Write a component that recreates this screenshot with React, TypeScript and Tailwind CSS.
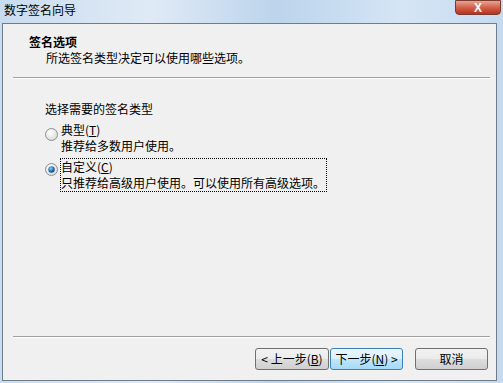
import React from "react";

const font = { fontFamily: '"Noto Sans CJK SC", "Liberation Sans", sans-serif' };

function Radio({ checked }: { checked?: boolean }) {
  return (
    <svg width="13" height="13" viewBox="0 0 13 13" className="shrink-0">
      <defs>
        <radialGradient id={checked ? "rg1" : "rg0"} cx="40%" cy="35%" r="70%">
          <stop offset="0%" stopColor="#ffffff" />
          <stop offset="100%" stopColor="#d8d8d8" />
        </radialGradient>
        <radialGradient id="dot" cx="40%" cy="35%" r="70%">
          <stop offset="0%" stopColor="#8fd0f5" />
          <stop offset="60%" stopColor="#1f6fb5" />
          <stop offset="100%" stopColor="#0b3c73" />
        </radialGradient>
      </defs>
      <circle cx="6.5" cy="6.5" r="6" fill={`url(#${checked ? "rg1" : "rg0"})`} stroke="#8e8f8f" strokeWidth="1" />
      {checked && <circle cx="6.5" cy="6.5" r="3.2" fill="url(#dot)" />}
    </svg>
  );
}

export default function App() {
  return (
    <div
      className="w-[503px] h-[383px] flex flex-col text-[12px] text-black overflow-hidden"
      style={{ ...font, background: "linear-gradient(90deg,#c9dcef 0%,#dfeaf6 30%,#bcd4ec 55%,#d5e5f5 80%,#c6daef 100%)" }}
    >
      <div className="h-[23px] flex items-start shrink-0">
        <div className="pl-[4px] pt-[1px] leading-[18px] text-[12px] text-black">数字签名向导</div>
        <div className="flex-1" />
        <div className="mr-[2px] w-[46px] h-[15px] rounded-b-[4px] border border-[#7a3a30] bg-[linear-gradient(180deg,#e8a595_0%,#d2604a_50%,#b8321e_100%)] flex items-center justify-center">
          <span className="text-white text-[12px] font-bold leading-none" style={{ fontFamily: '"Liberation Sans", sans-serif' }}>X</span>
        </div>
      </div>
      <div className="ml-[2px] mr-[6px] mb-[2px] flex-1 border border-[#6e7c8c] bg-[#f0f0f0] flex flex-col">
        <div className="pl-[26px] pt-[10px] h-[53px]">
          <div className="font-bold leading-[16px]">签名选项</div>
          <div className="pl-[17px] leading-[16px]">所选签名类型决定可以使用哪些选项。</div>
        </div>
        <div className="ml-[10px] mr-[6px] h-[2px] border-t border-[#a0a0a0] border-b border-b-white" />
        <div className="flex-1 pl-[42px] pt-[22px]">
          <div className="leading-[16px]">选择需要的签名类型</div>
          <div className="mt-[5px] flex items-start gap-[3px]">
            <div className="pt-[6px]"><Radio /></div>
            <div className="leading-[16px]">
              <div>典型(<span className="underline">T</span>)</div>
              <div>推荐给多数用户使用。</div>
            </div>
          </div>
          <div className="mt-[4px] flex items-start gap-[2px]">
            <div className="pt-[5px]"><Radio checked /></div>
            <div className="border border-dotted border-black pr-[1px] leading-[16px]">
              <div>自定义(<span className="underline">C</span>)</div>
              <div>只推荐给高级用户使用。可以使用所有高级选项。</div>
            </div>
          </div>
        </div>
        <div className="ml-[10px] mr-[6px] h-[2px] border-t border-[#a0a0a0] border-b border-b-white" />
        <div className="h-[42px] flex items-start pt-[10px] pr-[8px] justify-end">
          <button className="w-[74px] h-[22px] rounded-[3px] border border-[#707070] bg-[linear-gradient(180deg,#f2f2f2_0%,#ebebeb_50%,#dddddd_51%,#cfcfcf_100%)] text-[12px] leading-none">
            &lt; 上一步(<span className="underline">B</span>)
          </button>
          <button className="ml-[1px] w-[73px] h-[22px] rounded-[3px] border border-[#3c7fb1] bg-[linear-gradient(180deg,#eaf6fd_0%,#d9f0fc_50%,#bee6fd_51%,#a7d9f5_100%)] text-[12px] leading-none">
            下一步(<span className="underline">N</span>) &gt;
          </button>
          <button className="ml-[12px] w-[73px] h-[22px] rounded-[3px] border border-[#707070] bg-[linear-gradient(180deg,#f2f2f2_0%,#ebebeb_50%,#dddddd_51%,#cfcfcf_100%)] text-[12px] leading-none">
            取消
          </button>
        </div>
      </div>
    </div>
  );
}
